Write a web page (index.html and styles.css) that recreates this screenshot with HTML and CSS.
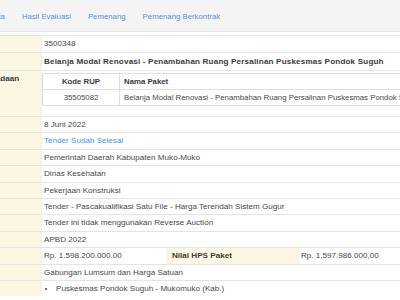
FILE: index.html
```html
<!DOCTYPE html>
<html>
<head>
<meta charset="utf-8">
<link rel="stylesheet" href="styles.css">
</head>
<body>
<div class="tabbar">
  <ul class="tabs">
    <li class="active"><a>Pengumuman</a></li>
    <li><a>Peserta</a></li>
    <li><a>Hasil Evaluasi</a></li>
    <li><a>Pemenang</a></li>
    <li><a>Pemenang Berkontrak</a></li>
  </ul>
</div>
<table class="info">
  <colgroup><col class="c1"><col class="c2"><col class="c3"><col class="c4"></colgroup>
  <tr class="r1"><th class="lbl">Kode Tender</th><td colspan="3">3500348</td></tr>
  <tr class="r2"><th class="lbl">Nama Tender</th><td colspan="3"><strong>Belanja Modal Renovasi - Penambahan Ruang Persalinan Puskesmas Pondok Suguh</strong></td></tr>
  <tr class="r3"><th class="lbl">Rencana Umum Pengadaan</th><td colspan="3" class="nest">
    <table class="rup">
      <colgroup><col class="k1"><col class="k2"></colgroup>
      <tr><th class="ctr">Kode RUP</th><th>Nama Paket</th></tr>
      <tr><td class="ctr">35505082</td><td>Belanja Modal Renovasi - Penambahan Ruang Persalinan Puskesmas Pondok Suguh</td></tr>
    </table>
  </td></tr>
  <tr><th class="lbl">Tanggal Pembuatan</th><td colspan="3">8 Juni 2022</td></tr>
  <tr><th class="lbl">Tahap Tender Saat Ini</th><td colspan="3"><a class="link">Tender Sudah Selesai</a></td></tr>
  <tr><th class="lbl">Instansi</th><td colspan="3">Pemerintah Daerah Kabupaten Muko-Muko</td></tr>
  <tr><th class="lbl">Satuan Kerja</th><td colspan="3">Dinas Kesehatan</td></tr>
  <tr><th class="lbl">Kategori</th><td colspan="3">Pekerjaan Konstruksi</td></tr>
  <tr><th class="lbl">Metode Pengadaan</th><td colspan="3">Tender - Pascakualifikasi Satu File - Harga Terendah Sistem Gugur</td></tr>
  <tr><th class="lbl">Reverse Auction</th><td colspan="3">Tender ini tidak menggunakan Reverse Auction</td></tr>
  <tr><th class="lbl">Anggaran</th><td colspan="3">APBD 2022</td></tr>
  <tr><th class="lbl">Nilai Pagu Paket</th><td>Rp. 1.598.200.000.00</td><th class="lbl hps">Nilai HPS Paket</th><td>Rp. 1.597.986.000,00</td></tr>
  <tr><th class="lbl">Jenis Kontrak</th><td colspan="3">Gabungan Lumsum dan Harga Satuan</td></tr>
  <tr><th class="lbl">Lokasi Pekerjaan</th><td colspan="3"><ul class="loc"><li>Puskesmas Pondok Suguh - Mukomuko (Kab.)</li></ul></td></tr>
</table>
</body>
</html>
```
FILE: styles.css
```css
html, body {
  margin: 0;
  padding: 0;
  background: #fff;
  overflow: hidden;
}
body {
  font-family: "Liberation Sans", Arial, Helvetica, sans-serif;
  font-size: 8.1px;
  color: #474747;
}
.tabbar {
  background: #f4f4f4;
  height: 31px;
  border-bottom: 1px solid #e6e6e6;
}
.tabs {
  display: flex;
  list-style: none;
  margin: 0 0 0 -96px;
  padding: 3px 0 0 0;
  height: 28px;
  align-items: center;
  font-size: 7.8px;
}
.tabs li a {
  display: block;
  padding: 0 8.5px;
  color: #4f94d4;
  line-height: 12px;
}
.info {
  margin: 3px 0 0 -90px;
  width: 588px;
  border-collapse: collapse;
  table-layout: fixed;
}
.c1 { width: 131px; }
.c2 { width: 125px; }
.c3 { width: 132px; }
.c4 { width: 200px; }
.info > tbody > tr > th,
.info > tbody > tr > td {
  padding: 2px 2.5px;
  line-height: 11.4px;
  border-top: 1px solid #e4e4e4;
  text-align: left;
  vertical-align: top;
  white-space: nowrap;
  overflow: visible;
}
.info > tbody > tr > td {
  border-left: 1px solid #efefef;
}
.info > tbody > tr > td.nest {
  padding-left: 0.5px;
}
.info > tbody > tr.r1 > th,
.info > tbody > tr.r1 > td {
  padding-top: 2.3px;
  padding-bottom: 2.3px;
}
.info > tbody > tr.r2 > th,
.info > tbody > tr.r2 > td {
  padding-top: 2.8px;
  padding-bottom: 2.8px;
}
.lbl {
  background: #fcf7e2;
  font-weight: bold;
  color: #3a3a3a;
}
.info > tbody > tr > th.hps {
  padding-left: 6px;
}
.info strong {
  color: #3a3a3a;
  letter-spacing: 0.17px;
}
.link {
  color: #4f94d4;
}
.rup {
  width: 458px;
  border-collapse: collapse;
  table-layout: fixed;
  margin: 0 0 8px 0;
  font-size: 7.8px;
}
.k1 { width: 77px; }
.k2 { width: 381px; }
.rup th, .rup td {
  border: 1px solid #e0e0e0;
  padding: 1.8px 4px;
  line-height: 11.4px;
  text-align: left;
  white-space: nowrap;
  overflow: hidden;
}
.rup th {
  font-weight: bold;
  color: #3a3a3a;
}
.rup .ctr {
  text-align: center;
}
.loc {
  margin: 0;
  padding: 0 0 0 12px;
  list-style: disc;
}
```
